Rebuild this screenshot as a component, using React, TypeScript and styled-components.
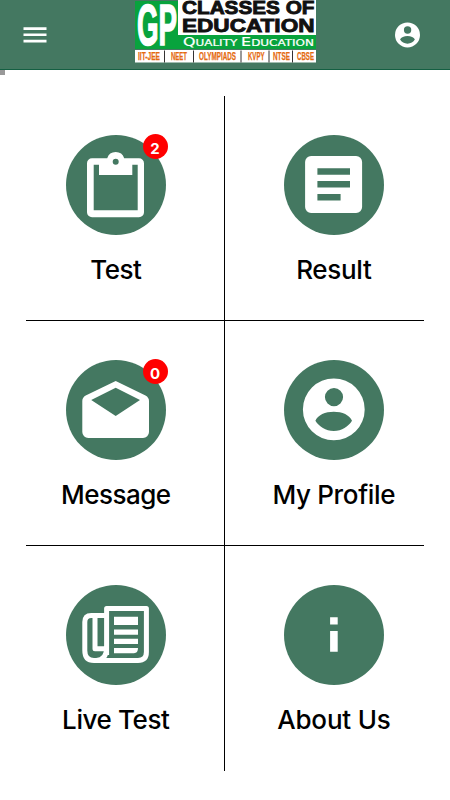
import React from 'react';
import styled, { createGlobalStyle } from 'styled-components';

const green = '#447861';

const GlobalStyle = createGlobalStyle`
  * { box-sizing: border-box; }
  body { margin: 0; background: #fff; font-family: Inter, 'Open Sans', sans-serif; }
`;

const Screen = styled.main`
  width: 450px;
  height: 800px;
  overflow: hidden;
  background: #fff;
`;

const Header = styled.header`
  height: 70px;
  display: grid;
  grid-template-columns: 135px 181px 1fr;
  align-items: start;
  justify-items: start;
  background: ${green};
  border-bottom: 1px solid #145f42;
`;

const IconButton = styled.button<{ $left: number; $top: number }>`
  display: block;
  padding: 0;
  border: 0;
  background: none;
  line-height: 0;
  margin: ${p => p.$top}px 0 0 ${p => p.$left}px;
`;

const Handle = styled.div`
  width: 5px;
  height: 5px;
  background: #999;
`;

const Grid = styled.section`
  display: grid;
  grid-template-columns: 199px 199px;
  grid-template-rows: 225px 225px 225px;
  margin: 21px 0 0 26px;
`;

const Tile = styled.a<{ $right: boolean; $last: boolean }>`
  display: flex;
  flex-direction: column;
  align-items: center;
  padding: ${p => (p.$right ? '39px 0 0 19px' : '39px 18px 0 0')};
  border-right: ${p => (p.$right ? '0' : '1px solid #000')};
  border-bottom: ${p => (p.$last ? '0' : '1px solid #000')};
`;

const Disc = styled.div`
  position: relative;
  width: 100px;
  height: 100px;
  border-radius: 50%;
  background: ${green};
`;

const Badge = styled.span`
  position: absolute;
  left: 76.5px;
  top: -1px;
  width: 25px;
  height: 25px;
  border-radius: 50%;
  background: #f00;
  color: #fff;
  font-size: 15px;
  font-weight: 700;
  line-height: 29px;
  text-align: center;
`;

const Label = styled.span<{ $spacing: number }>`
  margin-top: 18px;
  font-size: 26px;
  font-weight: 500;
  line-height: 34px;
  white-space: nowrap;
  color: #000;
  letter-spacing: ${p => p.$spacing}px;
  margin-right: ${p => -p.$spacing}px;
`;

const subjects = [
  { name: 'IIT-JEE', x: 3, w: 22, end: 29.5 },
  { name: 'NEET', x: 36, w: 16, end: 58.5 },
  { name: 'OLYMPIADS', x: 64, w: 37, end: 106 },
  { name: 'KVPY', x: 113, w: 16.5, end: 134 },
  { name: 'NTSE', x: 138, w: 17, end: 157.5 },
  { name: 'CBSE', x: 162, w: 17, end: 0 },
];

const Logo = () => (
  <svg width="181" height="63" viewBox="0 0 181 63" fontFamily="'Liberation Sans', Arial, sans-serif">
    <path fill="#fff" d="M43 0h138v35H43z" />
    <path fill="#08a33d" d="M0 1h43v34h138v14H0z" />
    <path fill="#fff" d="M0 50h181v12.5H0z" />
    <text x="2" y="44.6" fontSize="58" fontWeight="700" fill="#fff" stroke="#fff" strokeWidth="1.6" textLength="40" lengthAdjust="spacingAndGlyphs">GP</text>
    <g fill="#111" stroke="#111" strokeWidth=".9" fontWeight="700" fontSize="18.6">
      <text x="47" y="14.3" textLength="132.5" lengthAdjust="spacingAndGlyphs">CLASSES OF</text>
      <text x="47" y="32.3" textLength="132.5" lengthAdjust="spacingAndGlyphs">EDUCATION</text>
    </g>
    <text x="48" y="45.9" fill="#fff" stroke="#fff" strokeWidth=".2" textLength="131" lengthAdjust="spacingAndGlyphs" fontSize="8.7" fontFamily="'DejaVu Sans', sans-serif">
      <tspan fontSize="11.5">Q</tspan>UALITY <tspan fontSize="11.5">E</tspan>DUCATION
    </text>
    {subjects.map(s => (
      <React.Fragment key={s.name}>
        <text x={s.x} y="60.3" fill="#e56a10" stroke="#e56a10" strokeWidth=".25" fontSize="11" fontWeight="700" textLength={s.w} lengthAdjust="spacingAndGlyphs">{s.name}</text>
        {s.end > 0 && <path d={`M${s.end} 50.5v12`} stroke="#333" strokeWidth="1" />}
      </React.Fragment>
    ))}
  </svg>
);

const Glyph = ({ children }: { children: React.ReactNode }) => (
  <svg width="100" height="100" viewBox="0 0 100 100" fill="#fff" fillRule="evenodd">{children}</svg>
);

const profilePath =
  'M49.8 18.5a30.9 30.9 0 1 1 0 61.8a30.9 30.9 0 1 1 0-61.8ZM50 28a9.1 9.1 0 1 0 0 18.2a9.1 9.1 0 1 0 0-18.2ZM31.4 60.7c2.2-5.7 10-9 18.4-9s16 3.3 18.2 9c-3.8 6-10 10.2-18.2 10.2s-14.6-4.2-18.4-10.2Z';

const TestIcon = () => (
  <Glyph><path d="M26 23.3h15.2a8.9 8.9 0 0 1 17 0H73a5 5 0 0 1 5 5v49a5 5 0 0 1-5 5H26a5 5 0 0 1-5-5v-49a5 5 0 0 1 5-5ZM27.7 29.7v45.6h44V29.7h-5.4V40H33V29.7ZM49.7 23.7a3 3 0 1 0 0 6a3 3 0 1 0 0-6Z" /></Glyph>
);
const ResultIcon = () => (
  <Glyph><path d="M27.1 20.9h45a6 6 0 0 1 6 6v45a6 6 0 0 1-6 6h-45a6 6 0 0 1-6-6v-45a6 6 0 0 1 6-6ZM33.4 33.2v6.5H66v-6.5ZM33.4 46v6.5H66V46ZM33.4 59v6.5h23.2V59Z" /></Glyph>
);
const MessageIcon = () => (
  <Glyph><path d="M49.7 21 79.5 35.5q3.5 2 3.5 5.5v31a6 6 0 0 1-6 6H22.3a6 6 0 0 1-6-6V41q0-3.5 3.4-5.5ZM49.7 27.7 25.2 40l24.5 16L74 40Z" /></Glyph>
);
const ProfileIcon = () => <Glyph><path d={profilePath} /></Glyph>;
const LiveIcon = () => (
  <Glyph>
    <path d="M40.6 70V23.4h39.8V67q0 8.4-8.4 8.4H28q-9.2 0-9.2-10V37q0-6.6 6.5-6.6h15M29 30.4v33.3h11.6M40.6 63c0 8-4.2 12.4-10.5 12.4" fill="none" stroke="#fff" strokeWidth="5" strokeLinejoin="round" />
    <path d="M48 31.8h24V40H48ZM48 44.5h24v5.2H48ZM48 53.7h24v5.2H48ZM48 63h24q0 5.2-4 5.2H48Z" />
  </Glyph>
);
const AboutIcon = () => (
  <Glyph><path d="M46.1 32.3h7.6v7.2h-7.6ZM46.1 46h7.6v20.7h-7.6Z" /></Glyph>
);

const tiles = [
  { label: 'Test', Icon: TestIcon, badge: '2', spacing: -0.5 },
  { label: 'Result', Icon: ResultIcon, spacing: -0.3 },
  { label: 'Message', Icon: MessageIcon, badge: '0', spacing: -0.5 },
  { label: 'My Profile', Icon: ProfileIcon, spacing: -0.35 },
  { label: 'Live Test', Icon: LiveIcon, spacing: -0.4 },
  { label: 'About Us', Icon: AboutIcon, spacing: -0.2 },
];

export default function App() {
  return (
    <>
      <GlobalStyle />
      <Screen>
        <Header>
          <IconButton $left={23} $top={26} aria-label="Menu">
            <svg width="24" height="18" viewBox="0 0 24 18" fill="#fff">
              <path d="M.5 1.3h23v2.6H.5ZM.5 7.5h23v2.6H.5ZM.5 13.8h23v2.6H.5Z" />
            </svg>
          </IconButton>
          <Logo />
          <IconButton $left={79} $top={22} aria-label="Account">
            <svg width="25" height="26" viewBox="18.9 18.5 61.8 62" fill="#fff" fillRule="evenodd">
              <path d={profilePath} />
            </svg>
          </IconButton>
        </Header>
        <Handle />
        <Grid>
          {tiles.map(({ label, Icon, badge, spacing }, i) => (
            <Tile key={label} $right={i % 2 === 1} $last={i > 3}>
              <Disc>
                <Icon />
                {badge && <Badge>{badge}</Badge>}
              </Disc>
              <Label $spacing={spacing}>{label}</Label>
            </Tile>
          ))}
        </Grid>
      </Screen>
    </>
  );
}
